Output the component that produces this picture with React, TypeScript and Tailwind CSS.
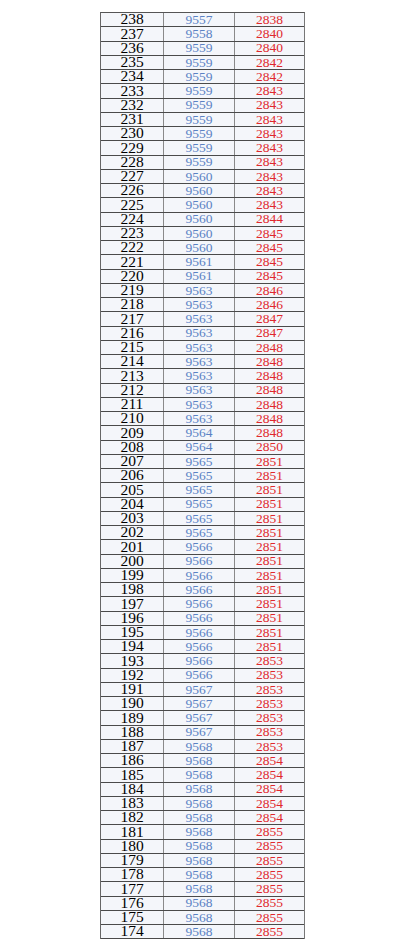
const rows: [number, number, number][] = [
  [238, 9557, 2838],
  [237, 9558, 2840],
  [236, 9559, 2840],
  [235, 9559, 2842],
  [234, 9559, 2842],
  [233, 9559, 2843],
  [232, 9559, 2843],
  [231, 9559, 2843],
  [230, 9559, 2843],
  [229, 9559, 2843],
  [228, 9559, 2843],
  [227, 9560, 2843],
  [226, 9560, 2843],
  [225, 9560, 2843],
  [224, 9560, 2844],
  [223, 9560, 2845],
  [222, 9560, 2845],
  [221, 9561, 2845],
  [220, 9561, 2845],
  [219, 9563, 2846],
  [218, 9563, 2846],
  [217, 9563, 2847],
  [216, 9563, 2847],
  [215, 9563, 2848],
  [214, 9563, 2848],
  [213, 9563, 2848],
  [212, 9563, 2848],
  [211, 9563, 2848],
  [210, 9563, 2848],
  [209, 9564, 2848],
  [208, 9564, 2850],
  [207, 9565, 2851],
  [206, 9565, 2851],
  [205, 9565, 2851],
  [204, 9565, 2851],
  [203, 9565, 2851],
  [202, 9565, 2851],
  [201, 9566, 2851],
  [200, 9566, 2851],
  [199, 9566, 2851],
  [198, 9566, 2851],
  [197, 9566, 2851],
  [196, 9566, 2851],
  [195, 9566, 2851],
  [194, 9566, 2851],
  [193, 9566, 2853],
  [192, 9566, 2853],
  [191, 9567, 2853],
  [190, 9567, 2853],
  [189, 9567, 2853],
  [188, 9567, 2853],
  [187, 9568, 2853],
  [186, 9568, 2854],
  [185, 9568, 2854],
  [184, 9568, 2854],
  [183, 9568, 2854],
  [182, 9568, 2854],
  [181, 9568, 2855],
  [180, 9568, 2855],
  [179, 9568, 2855],
  [178, 9568, 2855],
  [177, 9568, 2855],
  [176, 9568, 2855],
  [175, 9568, 2855],
  [174, 9568, 2855],
]

export default function App() {
  return (
    <div className="min-h-[951px] w-[404px] bg-white pt-[12px] pl-[100px]" style={{ fontFamily: '"Liberation Serif", "Times New Roman", serif' }}>
      <div className="w-[205px] border-t border-l border-r border-t-[#555] border-l-[#666] border-r-[#777] bg-[#f4f6fa]">
        {rows.map(([rank, score, total]) => (
          <div key={rank} className="flex h-[14.25px] border-b border-[#4a4a4a]">
            <div className="flex w-[63px] items-end justify-center border-r border-[#8a8a8a] text-[15.5px] leading-[14px] text-black">
              {rank}
            </div>
            <div className="flex w-[71px] items-end justify-center border-r border-[#8a8a8a] text-[13.5px] leading-[13.5px] text-[#5b82c4]">
              {score}
            </div>
            <div className="flex flex-1 items-end justify-center text-[13.5px] leading-[13.5px] text-[#e0282d]">
              {total}
            </div>
          </div>
        ))}
      </div>
    </div>
  )
}
